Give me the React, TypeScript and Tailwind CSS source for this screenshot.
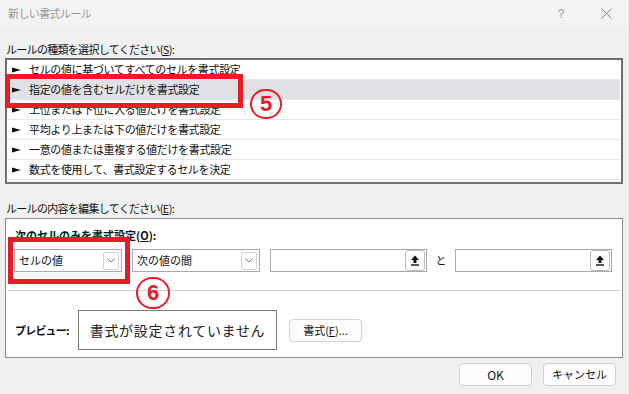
const RULES = [
  'セルの値に基づいてすべてのセルを書式設定',
  '指定の値を含むセルだけを書式設定',
  '上位または下位に入る値だけを書式設定',
  '平均より上または下の値だけを書式設定',
  '一意の値または重複する値だけを書式設定',
  '数式を使用して、書式設定するセルを決定',
]

function Arrow() {
  return (
    <svg width="9" height="6" viewBox="0 0 9 6" className="shrink-0">
      <polygon points="0,0.5 9,3 0,5.5" fill="#111" />
    </svg>
  )
}

function Select({ label, className }: { label: string; className: string }) {
  return (
    <div className={`flex items-center justify-between h-[23px] border border-[#aaaaaa] bg-white pl-[4px] pr-[2px] ${className}`}>
      <span className="leading-none">{label}</span>
      <span className="w-[16px] h-[18px] border border-[#d2d2d2] rounded-[2px] flex items-center justify-center">
        <svg width="8" height="5" viewBox="0 0 8 5">
          <path d="M0.5 0.5 L4 4 L7.5 0.5" fill="none" stroke="#777" strokeWidth="1" />
        </svg>
      </span>
    </div>
  )
}

function RefInput() {
  return (
    <div className="flex items-center justify-end h-[23px] w-[157px] border border-[#aaaaaa] bg-white pr-[1px]">
      <span className="w-[20px] h-[21px] border border-[#bdbdbd] rounded-[3px] bg-white flex items-center justify-center">
        <svg width="10" height="11" viewBox="0 0 10 11">
          <path d="M5 0.5 L9 5 H6.5 V8 H3.5 V5 H1 Z" fill="#111" />
          <rect x="1" y="9.3" width="8" height="1.4" fill="#111" />
        </svg>
      </span>
    </div>
  )
}

function Button({ children }: { children: React.ReactNode }) {
  return (
    <button className="w-[73px] h-[23px] border border-[#d0d0d0] rounded-[4px] bg-[#fdfdfd] text-[11px] text-[#111] leading-none">
      {children}
    </button>
  )
}

export default function App() {
  return (
    <div className="relative w-[630px] h-[394px] overflow-hidden bg-[#f0f0f0] border-r border-[#c9c9c9] text-[11px] text-[#111] font-['Noto_Sans_CJK_JP',sans-serif]">
      {/* Title bar */}
      <div className="flex items-center h-[27px] bg-[#f3f3f3] pl-[8px] pr-[17px] text-[#9a9a9a]">
        <span className="text-[11px] tracking-[-0.6px]">新しい書式ルール</span>
        <span className="ml-auto w-[12px] text-center text-[12px] font-['Liberation_Sans',sans-serif]">?</span>
        <span className="ml-[33px] w-[12px] flex justify-center">
          <svg width="11" height="11" viewBox="0 0 11 11">
            <path d="M0.5 0.5 L10.5 10.5 M10.5 0.5 L0.5 10.5" stroke="#8a8a8a" strokeWidth="1" />
          </svg>
        </span>
      </div>

      <div className="pl-[5px] pr-[6px]">
        <div className="mt-[13px] h-[18px] leading-[18px] pl-[1px] tracking-[-0.7px]">
          ルールの種類を選択してください(<span className="underline">S</span>):
        </div>

        {/* Rule type list */}
        <div className="h-[126px] border-2 border-[#6f6f6f] bg-white pr-[1px]">
          {RULES.map((rule, i) => (
            <div
              key={rule}
              className={`flex items-center gap-[8px] h-[20px] pl-[5px] border-b border-[#e8e8e8] ${i === 1 ? 'bg-[#e0e0e5]' : ''}`}
            >
              <Arrow />
              <span className="text-[11px] tracking-[-0.35px] leading-none">{rule}</span>
            </div>
          ))}
        </div>

        <div className="mt-[15px] h-[18px] leading-[18px] pl-[1px] tracking-[-0.7px]">
          ルールの内容を編集してください(<span className="underline">E</span>):
        </div>

        {/* Rule description */}
        <div className="mt-[1px] h-[140px] border border-[#8c8c8c] bg-white">
          <div className="mt-[8px] h-[16px] leading-[16px] pl-[9px] font-bold">
            次のセルのみを書式設定(<span className="underline">O</span>):
          </div>
          <div className="mt-[6px] flex items-center pl-[8px]">
            <Select label="セルの値" className="w-[108px]" />
            <Select label="次の値の間" className="w-[128px] ml-[10px]" />
            <div className="ml-[10px]">
              <RefInput />
            </div>
            <span className="w-[28px] text-center">と</span>
            <RefInput />
          </div>
          <div className="mt-[18px] mx-[1px] h-px bg-[#d4d4d4]" />
          <div className="mt-[19px] flex items-center pl-[9px]">
            <span className="w-[63px] font-bold tracking-[-0.8px]">プレビュー:</span>
            <div className="w-[199px] h-[40px] border border-[#7a7a7a] flex items-center justify-center text-[14px] tracking-[0.7px] text-[#222]">
              書式が設定されていません
            </div>
            <div className="ml-[12px]">
              <Button>
                書式(<span className="underline">F</span>)...
              </Button>
            </div>
          </div>
        </div>

        <div className="mt-[5px] flex justify-end gap-[11px] pr-[7px]">
          <Button>
            <span className="text-[12px]">OK</span>
          </Button>
          <Button>キャンセル</Button>
        </div>
      </div>

      {/* Annotations */}
      <div className="absolute left-[5px] top-[74px] w-[238px] h-[34px] border-[5px] border-[#e81c24]" />
      <div className="absolute left-[250px] top-[89px] w-[32px] h-[30px] rounded-full border-[2.5px] border-[#e81c24] flex items-center justify-center text-[22px] font-bold text-[#e81c24] leading-none font-['Liberation_Sans',sans-serif]">
        5
      </div>
      <div className="absolute left-[8px] top-[237px] w-[122px] h-[47px] border-[5px] border-[#e81c24]" />
      <div className="absolute left-[136px] top-[277px] w-[34px] h-[32px] rounded-full border-[2.5px] border-[#e81c24] flex items-center justify-center text-[22px] font-bold text-[#e81c24] leading-none font-['Liberation_Sans',sans-serif]">
        6
      </div>
    </div>
  )
}
